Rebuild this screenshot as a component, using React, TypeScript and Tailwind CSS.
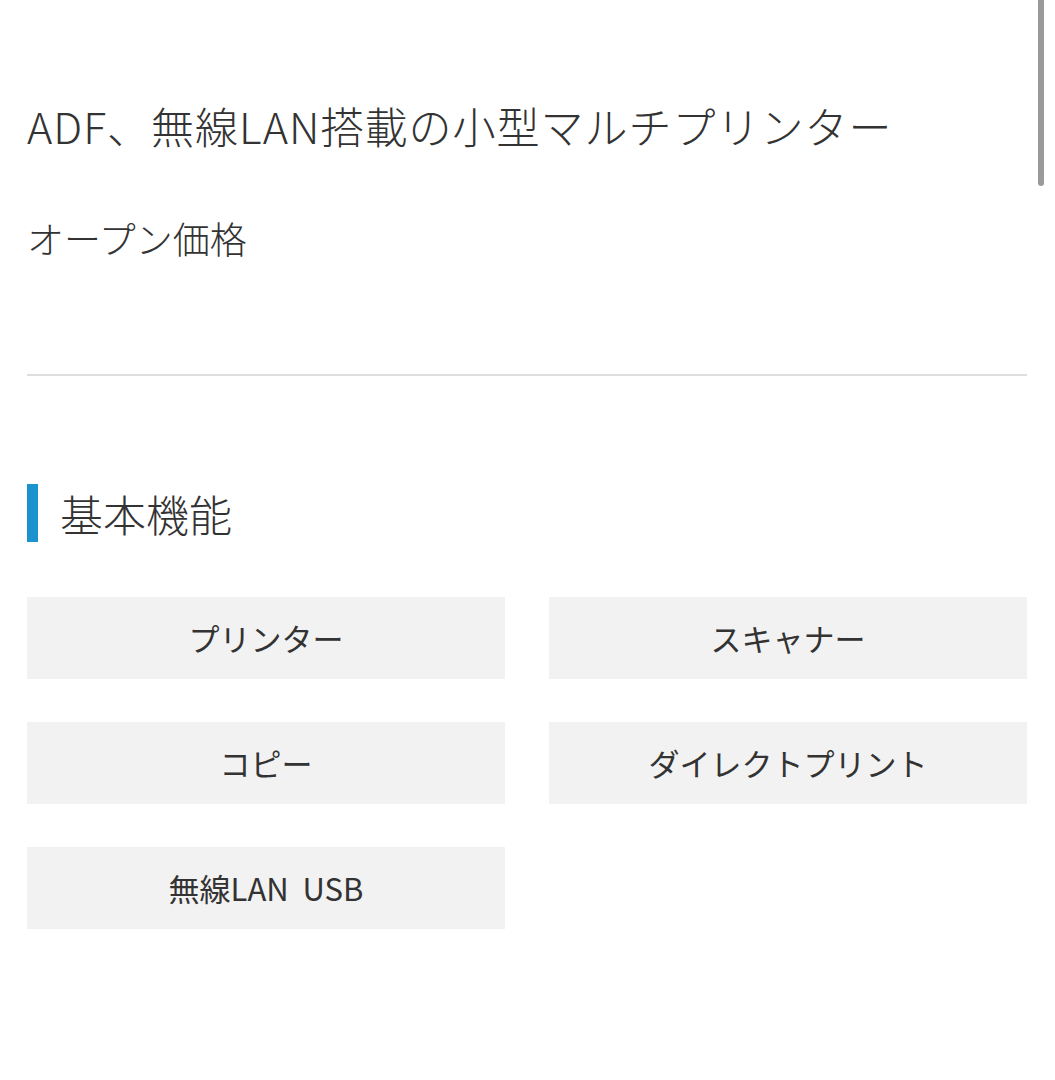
const features = ["プリンター", "スキャナー", "コピー", "ダイレクトプリント", "無線LAN\u00a0\u00a0USB"];

export default function App() {
  return (
    <div
      className="relative min-h-[1080px] bg-white text-[#333]"
      style={{ fontFamily: '"Noto Sans CJK JP", "Noto Sans", sans-serif' }}
    >
      {/* overlay scrollbar */}
      <div className="absolute right-[11px] top-0 h-[186px] w-[6px] rounded-b-full bg-[#9a9a9a]" />

      <div className="px-[27px] pr-[28px] pt-[96px] font-light">
        <h1 className="text-[43px] leading-[58px] font-light tracking-[1px]">ADF、無線LAN搭載の小型マルチプリンター</h1>
        <p className="mt-[58px] text-[37px] leading-[52px]">オープン価格</p>

        <hr className="mt-[110px] border-t-2 border-[#dedede]" />

        <div className="mt-[108px] flex items-center gap-[22px]">
          <span className="block h-[58px] w-[11px] bg-[#1b93cf]" />
          <h2 className="text-[43px] leading-[58px] font-light">基本機能</h2>
        </div>

        <div className="mt-[55px] grid grid-cols-2 gap-x-[44px] gap-y-[43px]">
          {features.map((f) => (
            <div
              key={f}
              className="flex h-[82px] items-center justify-center bg-[#f2f2f2] text-[31px] font-normal"
            >
              {f}
            </div>
          ))}
        </div>
      </div>
    </div>
  );
}
